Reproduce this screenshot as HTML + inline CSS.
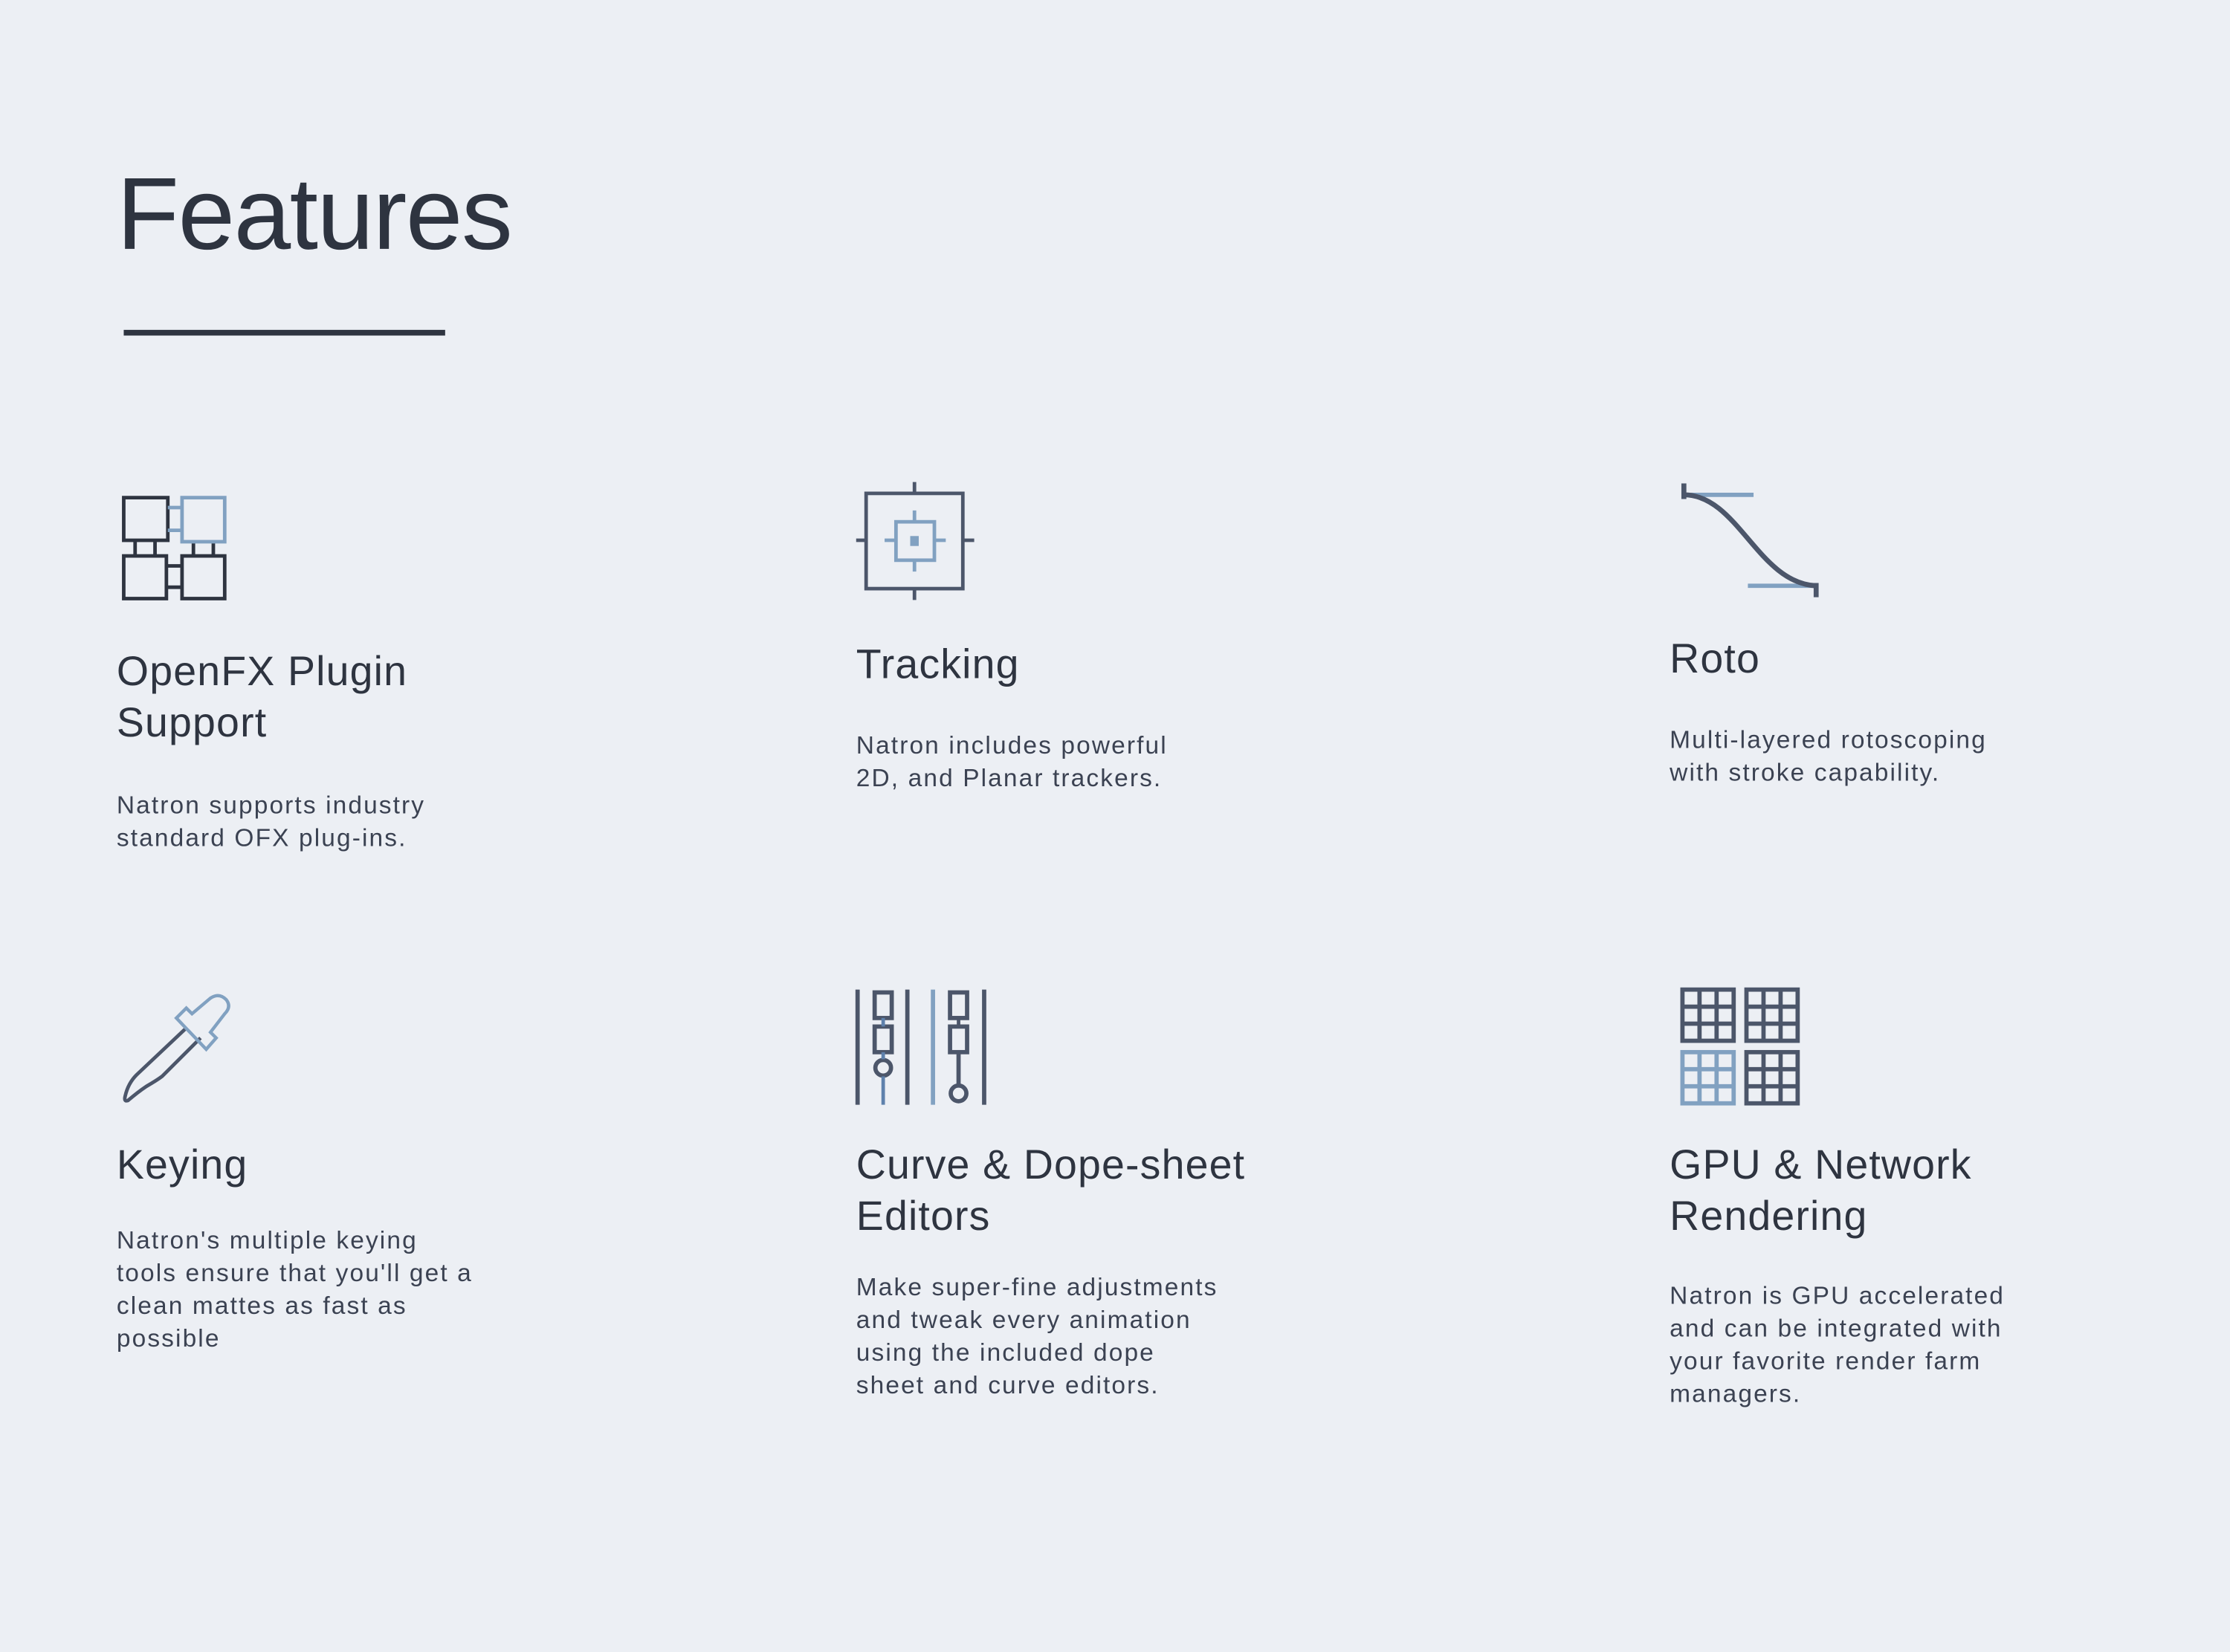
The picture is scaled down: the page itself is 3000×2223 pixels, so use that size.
<!DOCTYPE html>
<html><head><meta charset="utf-8">
<style>
html,body{margin:0;padding:0;background:#eceff4;width:3000px;height:2223px;overflow:hidden}
#w{position:absolute;left:0;top:0;width:1568px;height:1162px;transform:scale(1.91327);transform-origin:0 0;font-family:"Liberation Sans",sans-serif;color:#2e3440}
.t{position:absolute;white-space:nowrap}
.h{font-size:29px;line-height:36px;color:#2e3440;letter-spacing:0.6px}
.d{font-size:17.5px;line-height:23px;color:#3b4252;letter-spacing:1.1px}
svg{position:absolute;overflow:visible}
</style></head><body><div id="w">
<div class="t" style="left:82px;top:108px;font-size:72px;line-height:86px;letter-spacing:-0.8px">Features</div>
<div style="position:absolute;left:87px;top:232px;width:226px;height:4px;background:#2e3440"></div>

<svg style="left:0;top:0" width="1568" height="1162" fill="none" stroke-width="2.5">
<g stroke="#2e3440"><rect x="87" y="350" width="31" height="30"/><rect x="87" y="391" width="30" height="30"/><rect x="128" y="391" width="30" height="30"/>
<path d="M95 380V391M109 380V391M136 381V391M150 381V391M117 398H128M117 413H128"/></g>
<g stroke="#81a1c1"><rect x="128" y="350" width="30" height="31"/><path d="M118 357H128M118 373H128"/></g>
<g stroke="#4c566a"><rect x="609" y="347" width="68" height="67"/><path d="M643 339V347M643 414V422M602 380H609M677 380H685"/></g>
<g stroke="#81a1c1"><rect x="630" y="367" width="27" height="27"/><path d="M643 359V367M643 394V402M622 380H630M657 380H665"/></g>
<rect x="640" y="377" width="6" height="7" fill="#81a1c1"/>
<path d="M1184 348H1233M1229 412H1277" stroke="#81a1c1" stroke-width="3"/>
<path d="M1184 348C1222 348 1236 410 1277 412" stroke="#4c566a" stroke-width="3.5"/>
<path d="M1184 340V351M1277 410V420" stroke="#4c566a" stroke-width="3.5"/>
<path d="M131 723L96 756Q90 762 88 771Q87 775 90 774Q97 768 103 764Q110 760 114 757L141 730" stroke="#4c566a" stroke-width="2.5"/>
<path d="M124 716L131 709L135 713L148 702Q154 698 159 703Q163 708 158 713L148 726L152 730L145 738Z" stroke="#81a1c1" stroke-width="2.3"/>
<g stroke="#4c566a" stroke-width="3"><path d="M603 696V777M638 696V777M692 696V777"/>
<rect x="615" y="698" width="12" height="18"/><rect x="615" y="722" width="12" height="18"/><circle cx="621" cy="751" r="5.5"/>
<rect x="668" y="698" width="12" height="18"/><rect x="668" y="722" width="12" height="18"/><circle cx="674" cy="769" r="5.5"/><path d="M674 740V763"/></g>
<path d="M656 696V777" stroke="#81a1c1" stroke-width="3"/>
<path d="M621 716V722M621 740V745M621 757V777" stroke="#5e81ac" stroke-width="2.5"/>
<path d="M674 716V722" stroke="#4c566a" stroke-width="2.5"/>
<g stroke="#4c566a" stroke-width="3"><rect x="1183" y="696" width="36" height="36"/><path d="M1195 696V732M1207 696V732M1183 708H1219M1183 720H1219"/>
<rect x="1228" y="696" width="36" height="36"/><path d="M1240 696V732M1252 696V732M1228 708H1264M1228 720H1264"/>
<rect x="1228" y="740" width="36" height="36"/><path d="M1240 740V776M1252 740V776M1228 752H1264M1228 764H1264"/></g>
<g stroke="#81a1c1" stroke-width="3"><rect x="1183" y="740" width="36" height="36"/><path d="M1195 740V776M1207 740V776M1183 752H1219M1183 764H1219"/></g>
</svg>

<div class="t h" style="left:82px;top:455px">OpenFX Plugin<br>Support</div>
<div class="t d" style="left:82px;top:555px">Natron supports industry<br>standard OFX plug-ins.</div>

<div class="t h" style="left:602px;top:450px">Tracking</div>
<div class="t d" style="left:602px;top:513px">Natron includes powerful<br>2D, and Planar trackers.</div>

<div class="t h" style="left:1174px;top:446px">Roto</div>
<div class="t d" style="left:1174px;top:509px">Multi-layered rotoscoping<br>with stroke capability.</div>

<div class="t h" style="left:82px;top:802px">Keying</div>
<div class="t d" style="left:82px;top:861px">Natron's multiple keying<br>tools ensure that you'll get a<br>clean mattes as fast as<br>possible</div>

<div class="t h" style="left:602px;top:802px">Curve &amp; Dope-sheet<br>Editors</div>
<div class="t d" style="left:602px;top:894px">Make super-fine adjustments<br>and tweak every animation<br>using the included dope<br>sheet and curve editors.</div>

<div class="t h" style="left:1174px;top:802px">GPU &amp; Network<br>Rendering</div>
<div class="t d" style="left:1174px;top:900px">Natron is GPU accelerated<br>and can be integrated with<br>your favorite render farm<br>managers.</div>
</div></body></html>
